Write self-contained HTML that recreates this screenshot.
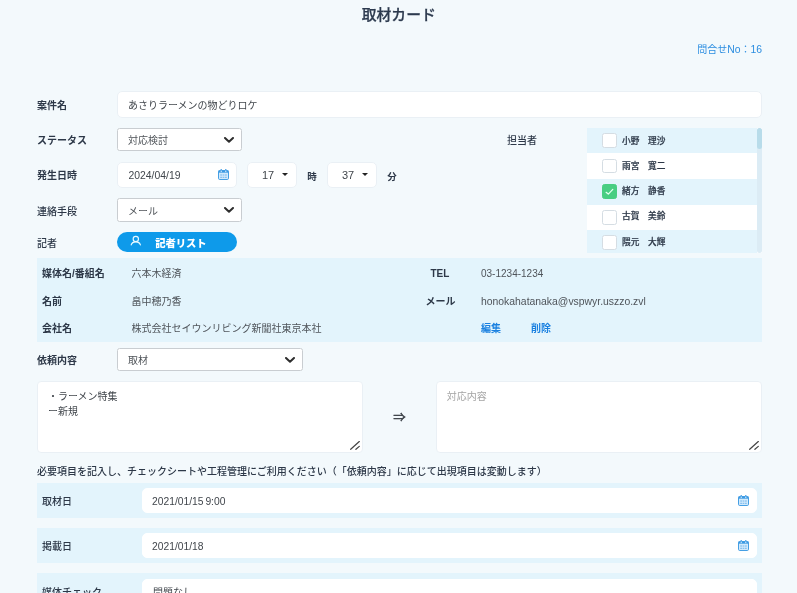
<!DOCTYPE html>
<html lang="ja">
<head>
<meta charset="utf-8">
<title>取材カード</title>
<style>
*{box-sizing:border-box;margin:0;padding:0}
html,body{width:797px;height:593px;overflow:hidden;background:#f3f9fc}
body{position:relative;font-family:"Liberation Sans","Noto Sans CJK JP",sans-serif;font-size:10px;color:#333c48;line-height:1;text-spacing-trim:space-all}
.abs{position:absolute;white-space:nowrap}
.lbl{position:absolute;white-space:nowrap;font-weight:700;font-size:10px;color:#2d3848;line-height:14px}
.inp{position:absolute;background:#fff;border:1px solid #eaf0f5;border-radius:5px;font-size:10px;color:#41464c;line-height:14px;white-space:nowrap}
.sel{position:absolute;background:#fff;border:1px solid #c9cdd1;border-radius:2.5px;font-size:10px;color:#4f5459;line-height:14px;white-space:nowrap}
.sel svg{position:absolute;right:7px;top:7.5px}
.txt{position:absolute;white-space:nowrap;font-size:10px;color:#4f545a;line-height:14px}
.band{position:absolute;background:#e3f4fc}
.link{position:absolute;color:#1a80e0;font-weight:700;font-size:10px;line-height:14px;white-space:nowrap}
.cb{position:absolute;width:14.5px;height:14.5px;background:#fff;border:1px solid #d5dde3;border-radius:2.5px}
.nm{position:absolute;-webkit-text-stroke:0.2px #2d3848;font-size:8.7px;font-weight:500;color:#2d3848;line-height:14px;white-space:pre}
.cal{position:absolute;width:11px;height:11px}
.car{position:absolute;width:0;height:0;border-left:3px solid transparent;border-right:3px solid transparent;border-top:3px solid #222}
.rz{position:absolute;width:10px;height:9px}
.ln{font-size:10.4px}
</style>
</head>
<body>
<div id="wrap" style="position:absolute;left:0;top:0;width:797px;height:593px;will-change:transform">
<div class="abs" style="left:0;width:797.5px;top:5px;text-align:center;font-size:14.8px;font-weight:500;line-height:20px;color:#2c3a4e;-webkit-text-stroke:0.25px #2c3a4e">取材カード</div>
<div class="abs" style="right:35px;top:43px;font-size:10px;line-height:14px;color:#2b8de0">問合せ<span class="ln">No</span>：<span class="ln">16</span></div>

<!-- row 1 -->
<div class="lbl" style="left:37px;top:99px">案件名</div>
<div class="inp" style="left:117px;top:91px;width:645px;height:26.5px;padding:7px 0 0 10px">あさりラーメンの物どりロケ</div>

<!-- row 2 -->
<div class="lbl" style="left:37px;top:134px">ステータス</div>
<div class="sel" style="left:117px;top:128px;width:125px;height:23px;padding:5px 0 0 10px">対応検討<svg width="10" height="6" viewBox="0 0 10 6"><path d="M1 1 L5 4.8 L9 1" fill="none" stroke="#2e2e2e" stroke-width="2" stroke-linecap="round" stroke-linejoin="round"/></svg></div>
<div class="lbl" style="left:507px;top:134px;font-weight:500">担当者</div>

<!-- assignee list -->
<div class="abs" style="left:587px;top:128px;width:175px;height:125px;background:#fff;overflow:hidden">
  <div class="band" style="left:0;top:0;width:170px;height:25.4px"></div>
  <div class="band" style="left:0;top:51px;width:170px;height:25.5px"></div>
  <div class="band" style="left:0;top:102px;width:170px;height:25.5px"></div>
  <div class="abs" style="left:170px;top:0;width:5px;height:125px;background:#dcecf5;border-radius:2.5px"></div>
  <div class="abs" style="left:170px;top:0;width:5px;height:21px;background:#b8dcea;border-radius:2.5px"></div>
  <div class="cb" style="left:15.3px;top:5.2px"></div><div class="nm" style="left:35px;top:5.5px">小野　理沙</div>
  <div class="cb" style="left:15.3px;top:30.5px"></div><div class="nm" style="left:35px;top:30.5px">雨宮　寛二</div>
  <div class="cb" style="left:15.3px;top:56px;background:#48ce82;border-color:#48ce82"><svg width="13" height="13" viewBox="0 0 13 13" style="position:absolute;left:0;top:0"><path d="M3.1 7.3 L5.3 9.1 L9.8 4.4" fill="none" stroke="#e4fff0" stroke-width="1.25" stroke-linecap="round" stroke-linejoin="round"/></svg></div><div class="nm" style="left:35px;top:56px">緒方　静香</div>
  <div class="cb" style="left:15.3px;top:82px"></div><div class="nm" style="left:35px;top:81px">古賀　美鈴</div>
  <div class="cb" style="left:15.3px;top:107.2px"></div><div class="nm" style="left:35px;top:107px">隈元　大輝</div>
</div>

<!-- row 3 -->
<div class="lbl" style="left:37px;top:169px">発生日時</div>
<div class="inp" style="left:117px;top:162px;width:119.5px;height:25.5px;padding:6px 0 0 10.5px"><span class="ln">2024/04/19</span></div>
<svg class="cal" style="left:218px;top:169px" viewBox="0 0 11 11"><rect x="0.5" y="1.5" width="10" height="9" rx="1.2" fill="#d2eafc" stroke="#3c9ae3" stroke-width="0.95"/><rect x="0.5" y="1.5" width="10" height="2.2" fill="#3c9ae3"/><rect x="2.6" y="0" width="1.2" height="1.6" fill="#3c9ae3"/><rect x="7.2" y="0" width="1.2" height="1.6" fill="#3c9ae3"/><rect x="2.7" y="1.6" width="1" height="1.5" fill="#e8f5ff"/><rect x="7.3" y="1.6" width="1" height="1.5" fill="#e8f5ff"/><path d="M2.2 6h6.6M2.2 8.3h6.6" stroke="#6db2ea" stroke-width="0.9" stroke-dasharray="1.8 0.6" fill="none"/></svg>
<div class="inp" style="left:247px;top:162px;width:49.5px;height:25.5px;padding:5px 0 0 14px;font-size:11px">17</div>
<div class="car" style="left:282.3px;top:172.7px"></div>
<div class="lbl" style="left:307.3px;top:170px;font-size:9.5px">時</div>
<div class="inp" style="left:327px;top:162px;width:49.5px;height:25.5px;padding:5px 0 0 14px;font-size:11px">37</div>
<div class="car" style="left:362.1px;top:172.7px"></div>
<div class="lbl" style="left:387.3px;top:170px;font-size:9.5px">分</div>

<!-- row 4 -->
<div class="lbl" style="left:37px;top:205px;font-weight:500">連絡手段</div>
<div class="sel" style="left:117px;top:198px;width:125px;height:23.5px;padding:6px 0 0 10px">メール<svg width="10" height="6" viewBox="0 0 10 6"><path d="M1 1 L5 4.8 L9 1" fill="none" stroke="#2e2e2e" stroke-width="2" stroke-linecap="round" stroke-linejoin="round"/></svg></div>

<!-- row 5 -->
<div class="lbl" style="left:37px;top:237px;font-weight:500">記者</div>
<div class="abs" style="left:117px;top:232px;width:120px;height:20px;border-radius:10px;background:#0e9aea;color:#fff;font-weight:900;font-size:10.3px;line-height:14px;padding:5px 0 0 38.2px">記者リスト</div>
<svg class="abs" style="left:130.1px;top:235px" width="12" height="11" viewBox="0 0 12 11"><circle cx="5.8" cy="4" r="2.65" fill="none" stroke="#e8f9ff" stroke-width="1.15"/><path d="M1.2 9.9 C1.8 7.8 3.5 6.9 5.8 6.9 C8.1 6.9 9.8 7.8 10.4 9.9" fill="none" stroke="#e8f9ff" stroke-width="1.2" stroke-linecap="round"/></svg>

<!-- info band -->
<div class="band" style="left:37px;top:258px;width:725px;height:84.4px"></div>
<div class="lbl" style="left:42px;top:267px">媒体名/番組名</div><div class="txt" style="left:131.6px;top:267px">六本木経済</div>
<div class="lbl" style="left:42px;top:295px">名前</div><div class="txt" style="left:131.6px;top:295px">畠中穂乃香</div>
<div class="lbl" style="left:42px;top:322px">会社名</div><div class="txt" style="left:131.6px;top:322px">株式会社セイウンリビング新聞社東京本社</div>
<div class="lbl" style="left:430.5px;top:267px">TEL</div><div class="txt" style="left:481px;top:267px">03-1234-1234</div>
<div class="lbl" style="left:425.5px;top:295px">メール</div><div class="txt" style="left:481px;top:295px"><span class="ln">honokahatanaka@vspwyr.uszzo.zvl</span></div>
<div class="link" style="left:481px;top:322px">編集</div><div class="link" style="left:531px;top:322px">削除</div>

<!-- request -->
<div class="lbl" style="left:37px;top:354px">依頼内容</div>
<div class="sel" style="left:117px;top:348px;width:186px;height:23px;padding:5px 0 0 10px">取材<svg width="10" height="6" viewBox="0 0 10 6"><path d="M1 1 L5 4.8 L9 1" fill="none" stroke="#2e2e2e" stroke-width="2" stroke-linecap="round" stroke-linejoin="round"/></svg></div>

<div class="inp" style="left:37px;top:381px;width:326px;height:71.5px;padding:6.5px 0 0 10px;line-height:15px;border-radius:4px">・ラーメン特集<br>ー新規</div>
<svg class="rz" style="left:350.2px;top:441.4px" viewBox="0 0 10 9"><path d="M0.7 8.3 L9.3 0.5 M5.9 8.3 L9.3 5.4" fill="none" stroke="#444" stroke-width="1.2" stroke-linecap="round"/></svg>
<div class="abs" style="left:393.2px;top:410px;font-size:12.4px;line-height:16px;color:#2a2f36;-webkit-text-stroke:0.3px #2a2f36">⇒</div>
<div class="inp" style="left:435.5px;top:381px;width:326.3px;height:71.5px;padding:6.5px 0 0 10.2px;line-height:15px;color:#a4a4a4;border-radius:4px">対応内容</div>
<svg class="rz" style="left:749.1px;top:441.4px" viewBox="0 0 10 9"><path d="M0.7 8.3 L9.3 0.5 M5.9 8.3 L9.3 5.4" fill="none" stroke="#444" stroke-width="1.2" stroke-linecap="round"/></svg>

<div class="lbl" style="left:37px;top:465px;font-weight:500">必要項目を記入し、チェックシートや工程管理にご利用ください（「依頼内容」に応じて出現項目は変動します）</div>

<div class="band" style="left:37px;top:483px;width:725px;height:34.5px"></div>
<div class="lbl" style="left:42px;top:495px;font-weight:500">取材日</div>
<div class="inp" style="left:141.5px;top:488px;width:615.5px;height:25px;padding:6px 0 0 9.5px;border-color:#fff"><span class="ln" style="font-size:10.3px;word-spacing:-1px">2021/01/15 9:00</span></div>
<svg class="cal" style="left:738px;top:495px" viewBox="0 0 11 11"><rect x="0.5" y="1.5" width="10" height="9" rx="1.2" fill="#d2eafc" stroke="#3c9ae3" stroke-width="0.95"/><rect x="0.5" y="1.5" width="10" height="2.2" fill="#3c9ae3"/><rect x="2.6" y="0" width="1.2" height="1.6" fill="#3c9ae3"/><rect x="7.2" y="0" width="1.2" height="1.6" fill="#3c9ae3"/><rect x="2.7" y="1.6" width="1" height="1.5" fill="#e8f5ff"/><rect x="7.3" y="1.6" width="1" height="1.5" fill="#e8f5ff"/><path d="M2.2 6h6.6M2.2 8.3h6.6" stroke="#6db2ea" stroke-width="0.9" stroke-dasharray="1.8 0.6" fill="none"/></svg>

<div class="band" style="left:37px;top:528px;width:725px;height:34.5px"></div>
<div class="lbl" style="left:42px;top:540px;font-weight:500">掲載日</div>
<div class="inp" style="left:141.5px;top:533px;width:615.5px;height:25px;padding:6px 0 0 9.5px;border-color:#fff"><span class="ln" style="font-size:10.3px">2021/01/18</span></div>
<svg class="cal" style="left:738px;top:540px" viewBox="0 0 11 11"><rect x="0.5" y="1.5" width="10" height="9" rx="1.2" fill="#d2eafc" stroke="#3c9ae3" stroke-width="0.95"/><rect x="0.5" y="1.5" width="10" height="2.2" fill="#3c9ae3"/><rect x="2.6" y="0" width="1.2" height="1.6" fill="#3c9ae3"/><rect x="7.2" y="0" width="1.2" height="1.6" fill="#3c9ae3"/><rect x="2.7" y="1.6" width="1" height="1.5" fill="#e8f5ff"/><rect x="7.3" y="1.6" width="1" height="1.5" fill="#e8f5ff"/><path d="M2.2 6h6.6M2.2 8.3h6.6" stroke="#6db2ea" stroke-width="0.9" stroke-dasharray="1.8 0.6" fill="none"/></svg>

<div class="band" style="left:37px;top:573px;width:725px;height:34.5px"></div>
<div class="lbl" style="left:42px;top:586px;font-weight:500">媒体チェック</div>
<div class="inp" style="left:142.4px;top:578.5px;width:614.6px;height:25px;padding:6px 0 0 9.6px;border-color:#fff">問題なし</div>
</div>
</body>
</html>
